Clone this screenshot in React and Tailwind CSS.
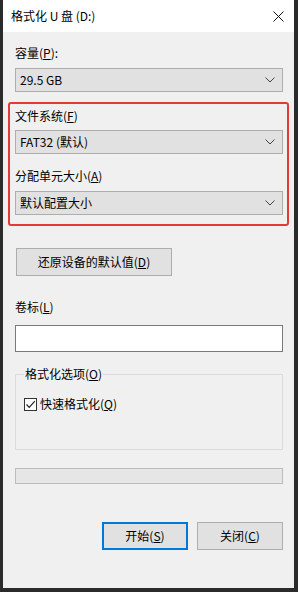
import React from "react";

const font = { fontFamily: '"Noto Sans CJK SC", "Noto Sans", sans-serif' };

function Chevron() {
  return (
    <svg width="10" height="6" viewBox="0 0 10 6" className="shrink-0">
      <path d="M0.5 0.5 L5 5 L9.5 0.5" fill="none" stroke="#444" strokeWidth="1" />
    </svg>
  );
}

function Combo({ value }) {
  return (
    <div className="flex h-[24px] items-center justify-between border border-[#adadad] bg-[#e1e1e1] pl-[4px] pr-[7px] text-[12px] leading-[16px] text-black">
      <span>{value}</span>
      <Chevron />
    </div>
  );
}

function Label({ children, className = "" }) {
  return <div className={`text-[12px] leading-[16px] text-black ${className}`}>{children}</div>;
}

function Btn({ children, primary, className = "" }) {
  return (
    <div
      className={`flex h-[28px] items-center justify-center bg-[#e1e1e1] text-[12px] leading-[16px] text-black ${
        primary ? "border-2 border-[#0078d7]" : "border border-[#adadad]"
      } ${className}`}
    >
      {children}
    </div>
  );
}

export default function App() {
  return (
    <div className="flex h-[592px] w-[298px] flex-col border-b-4 border-l-[3px] border-r-4 border-[#2b2b2b] bg-[#f0f0f0]" style={font}>
      {/* title bar */}
      <div className="flex h-[32px] items-center justify-between bg-white pl-[8px] pr-[10px]">
        <span className="text-[12px] leading-[16px] text-black">格式化 U 盘 (D:)</span>
        <svg width="11" height="11" viewBox="0 0 11 11">
          <path d="M0.5 0.5 L10.5 10.5 M10.5 0.5 L0.5 10.5" stroke="#111" strokeWidth="1" />
        </svg>
      </div>

      <div className="flex flex-1 flex-col pl-[12px] pr-[11px] pt-[13px]">
        <Label>
          容量(<u>P</u>):
        </Label>
        <div className="mt-[7px]">
          <Combo value="29.5 GB" />
        </div>

        {/* highlighted section */}
        <div className="ml-[-7px] mr-[-6px] mt-[10px] rounded-[3px] border-2 border-[#e53935] pb-[9px] pl-[5px] pr-[4px] pt-[4px]">
          <Label>
            文件系统(<u>F</u>)
          </Label>
          <div className="mt-[6px]">
            <Combo value="FAT32 (默认)" />
          </div>
          <Label className="mt-[14px]">
            分配单元大小(<u>A</u>)
          </Label>
          <div className="mt-[7px]">
            <Combo value="默认配置大小" />
          </div>
        </div>

        <Btn className="ml-[1px] mt-[22px] w-[156px]">
          还原设备的默认值(<u>D</u>)
        </Btn>

        <Label className="mt-[23px]">
          卷标(<u>L</u>)
        </Label>
        <div className="mt-[10px] h-[27px] border border-[#7a7a7a] bg-white" />

        <fieldset className="mt-[14px] border border-[#dcdcdc] pb-[37px] pl-[8px] pr-[8px]">
          <legend className="px-[1px] text-[12px] leading-[16px] text-black">
            格式化选项(<u>O</u>)
          </legend>
          <div className="mt-[14px] flex items-center gap-[3px]">
            <div className="flex h-[13px] w-[13px] items-center justify-center border border-[#333] bg-white">
              <svg width="11" height="11" viewBox="0 0 11 11">
                <path d="M1.5 5.5 L4.2 8.3 L9.8 2.2" fill="none" stroke="#222" strokeWidth="1.2" />
              </svg>
            </div>
            <span className="text-[12px] leading-[16px] text-black">
              快速格式化(<u>Q</u>)
            </span>
          </div>
        </fieldset>

        <div className="mt-[18px] h-[16px] border border-[#bcbcbc] bg-[#e6e6e6]" />

        <div className="mt-[38px] flex justify-end gap-[9px]">
          <Btn primary className="w-[86px]">
            开始(<u>S</u>)
          </Btn>
          <Btn className="w-[86px]">
            关闭(<u>C</u>)
          </Btn>
        </div>
      </div>
    </div>
  );
}
